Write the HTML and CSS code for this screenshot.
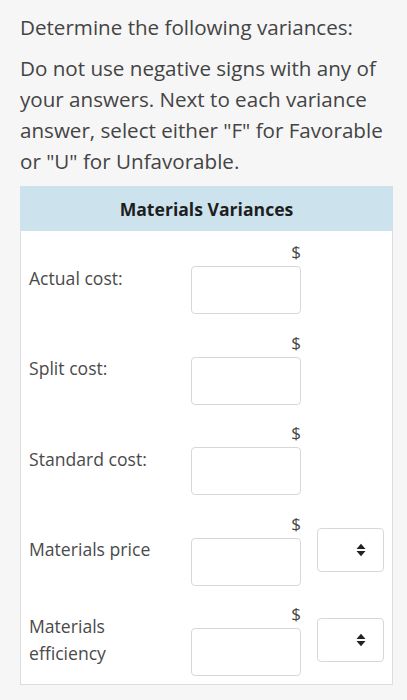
FILE: index.html
```html
<!DOCTYPE html>
<html>
<head>
<meta charset="utf-8">
<link rel="stylesheet" href="styles.css">
</head>
<body>
<div class="page">
  <p class="intro">Determine the following variances:</p>
  <p class="intro">Do not use negative signs with any of your answers. Next to each variance answer, select either "F" for Favorable or "U" for Unfavorable.</p>
  <div class="table">
    <div class="head">Materials Variances</div>
    <div class="rows">
      <div class="row">
        <div class="label">Actual cost:</div>
        <div class="field"><span class="cur">$</span><div class="input"></div></div>
      </div>
      <div class="row">
        <div class="label">Split cost:</div>
        <div class="field"><span class="cur">$</span><div class="input"></div></div>
      </div>
      <div class="row">
        <div class="label">Standard cost:</div>
        <div class="field"><span class="cur">$</span><div class="input"></div></div>
      </div>
      <div class="row">
        <div class="label">Materials price</div>
        <div class="field"><span class="cur">$</span><div class="input"></div></div>
        <div class="select"><svg width="10" height="14" viewBox="0 0 10 14"><path d="M0.5 6 L5 0.8 L9.5 6 Z M0.5 8 L5 13.2 L9.5 8 Z" fill="#222"/></svg></div>
      </div>
      <div class="row">
        <div class="label">Materials<br>efficiency</div>
        <div class="field"><span class="cur">$</span><div class="input"></div></div>
        <div class="select"><svg width="10" height="14" viewBox="0 0 10 14"><path d="M0.5 6 L5 0.8 L9.5 6 Z M0.5 8 L5 13.2 L9.5 8 Z" fill="#222"/></svg></div>
      </div>
    </div>
  </div>
</div>
</body>
</html>
```
FILE: styles.css
```css
html, body {
  margin: 0;
  padding: 0;
  background: #f6f6f6;
}
.page {
  padding: 12px 14px 0 20px;
  font-family: "Open Sans", "Liberation Sans", sans-serif;
  color: #444;
}
.intro {
  margin: 0 0 9.5px 0;
  font-size: 20.6px;
  line-height: 31px;
}
.table {
  margin-top: 3px;
  background: #fff;
  border: 1px solid #dddddd;
  border-top: none;
}
.head {
  background: #cce3ee;
  height: 45px;
  display: flex;
  align-items: center;
  justify-content: center;
  font-weight: 700;
  font-size: 17.6px;
  color: #1e1e1e;
  margin: 0 -1px;
}
.rows {
  display: flex;
  flex-direction: column;
  gap: 18.5px;
  padding: 11px 8px 8px 8px;
}
.row {
  display: grid;
  grid-template-columns: 1fr 110px 83px;
  align-items: center;
}
.label {
  font-size: 17.6px;
  line-height: 27px;
  color: #4a4a4a;
}
.field {
  display: flex;
  flex-direction: column;
  align-items: flex-end;
}
.cur {
  font-size: 17px;
  line-height: 20px;
  margin-bottom: 4px;
  color: #444;
}
.input {
  align-self: stretch;
  height: 48px;
  box-sizing: border-box;
  border: 1px solid #d8d8d8;
  border-radius: 4px;
  background: #fff;
}
.select {
  justify-self: end;
  width: 67px;
  height: 44px;
  box-sizing: border-box;
  border: 1px solid #d8d8d8;
  border-radius: 4px;
  background: #fff;
  display: flex;
  align-items: center;
  justify-content: flex-end;
  padding-right: 17px;
}
.select svg {
  display: block;
}
```
